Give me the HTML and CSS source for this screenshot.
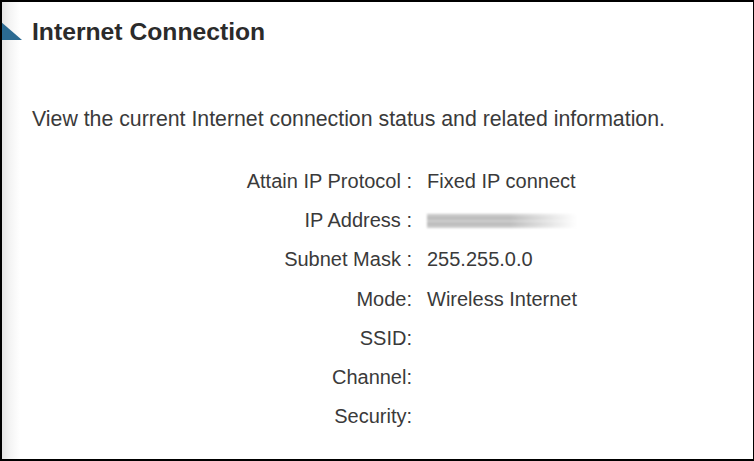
FILE: index.html
```html
<!DOCTYPE html>
<html>
<head>
<meta charset="utf-8">
<link rel="stylesheet" href="styles.css">
</head>
<body>
<div class="frame">
  <div class="header">
    <svg class="tri" width="22" height="19" viewBox="0 0 22 19"><polygon points="0,0 22,19 0,19" fill="#2b6a92"/></svg>
    <h1 class="title">Internet Connection</h1>
  </div>
  <p class="desc">View the current Internet connection status and related information.</p>
  <div class="info">
    <div class="label">Attain IP Protocol :</div><div class="value">Fixed IP connect</div>
    <div class="label">IP Address :</div><div class="value"><div class="blur"></div></div>
    <div class="label">Subnet Mask :</div><div class="value">255.255.0.0</div>
    <div class="label">Mode:</div><div class="value">Wireless Internet</div>
    <div class="label">SSID:</div><div class="value"></div>
    <div class="label">Channel:</div><div class="value"></div>
    <div class="label">Security:</div><div class="value"></div>
  </div>
</div>
</body>
</html>
```
FILE: styles.css
```css
html, body {
  margin: 0;
  padding: 0;
  background: #fff;
}
.frame {
  box-sizing: border-box;
  width: 754px;
  height: 461px;
  border-top: 2px solid #000;
  border-left: 2px solid #000;
  border-bottom: 2px solid #000;
  border-right: 1px solid #000;
  background: linear-gradient(to right, #e4e4e4 0px, #f4f4f4 8px, #ffffff 18px);
  font-family: "Liberation Sans", Arial, sans-serif;
  color: #333;
  display: flex;
  flex-direction: column;
  overflow: hidden;
}
.header {
  display: flex;
  align-items: flex-start;
  margin-top: 16px;
  margin-left: -2px;
  height: 28px;
}
.tri {
  display: block;
  margin-top: 3px;
  flex: none;
}
.title {
  margin: 0 0 0 10px;
  font-size: 24.7px;
  line-height: 28px;
  font-weight: bold;
  color: #2b2b2b;
}
.desc {
  margin: 61px 0 0 30px;
  font-size: 21.3px;
  line-height: 24px;
  color: #3a3a3a;
}
.info {
  margin-top: 38px;
  padding-left: 30px;
  display: grid;
  grid-template-columns: 380px auto;
  grid-auto-rows: 39.2px;
  column-gap: 15px;
  font-size: 20px;
  line-height: 24px;
  color: #3a3a3a;
}
.label {
  text-align: right;
}
.value {
  display: flex;
  align-items: flex-start;
}
.blur {
  margin-top: 6px;
  width: 150px;
  height: 14px;
  background: linear-gradient(to right, rgba(255,255,255,0) 55%, #fff 100%),
    repeating-linear-gradient(to bottom, #b5b5b5 0px, #d8d8d8 2px, #a8a8a8 4px, #e0e0e0 6px);
  filter: blur(1px);
}
```
